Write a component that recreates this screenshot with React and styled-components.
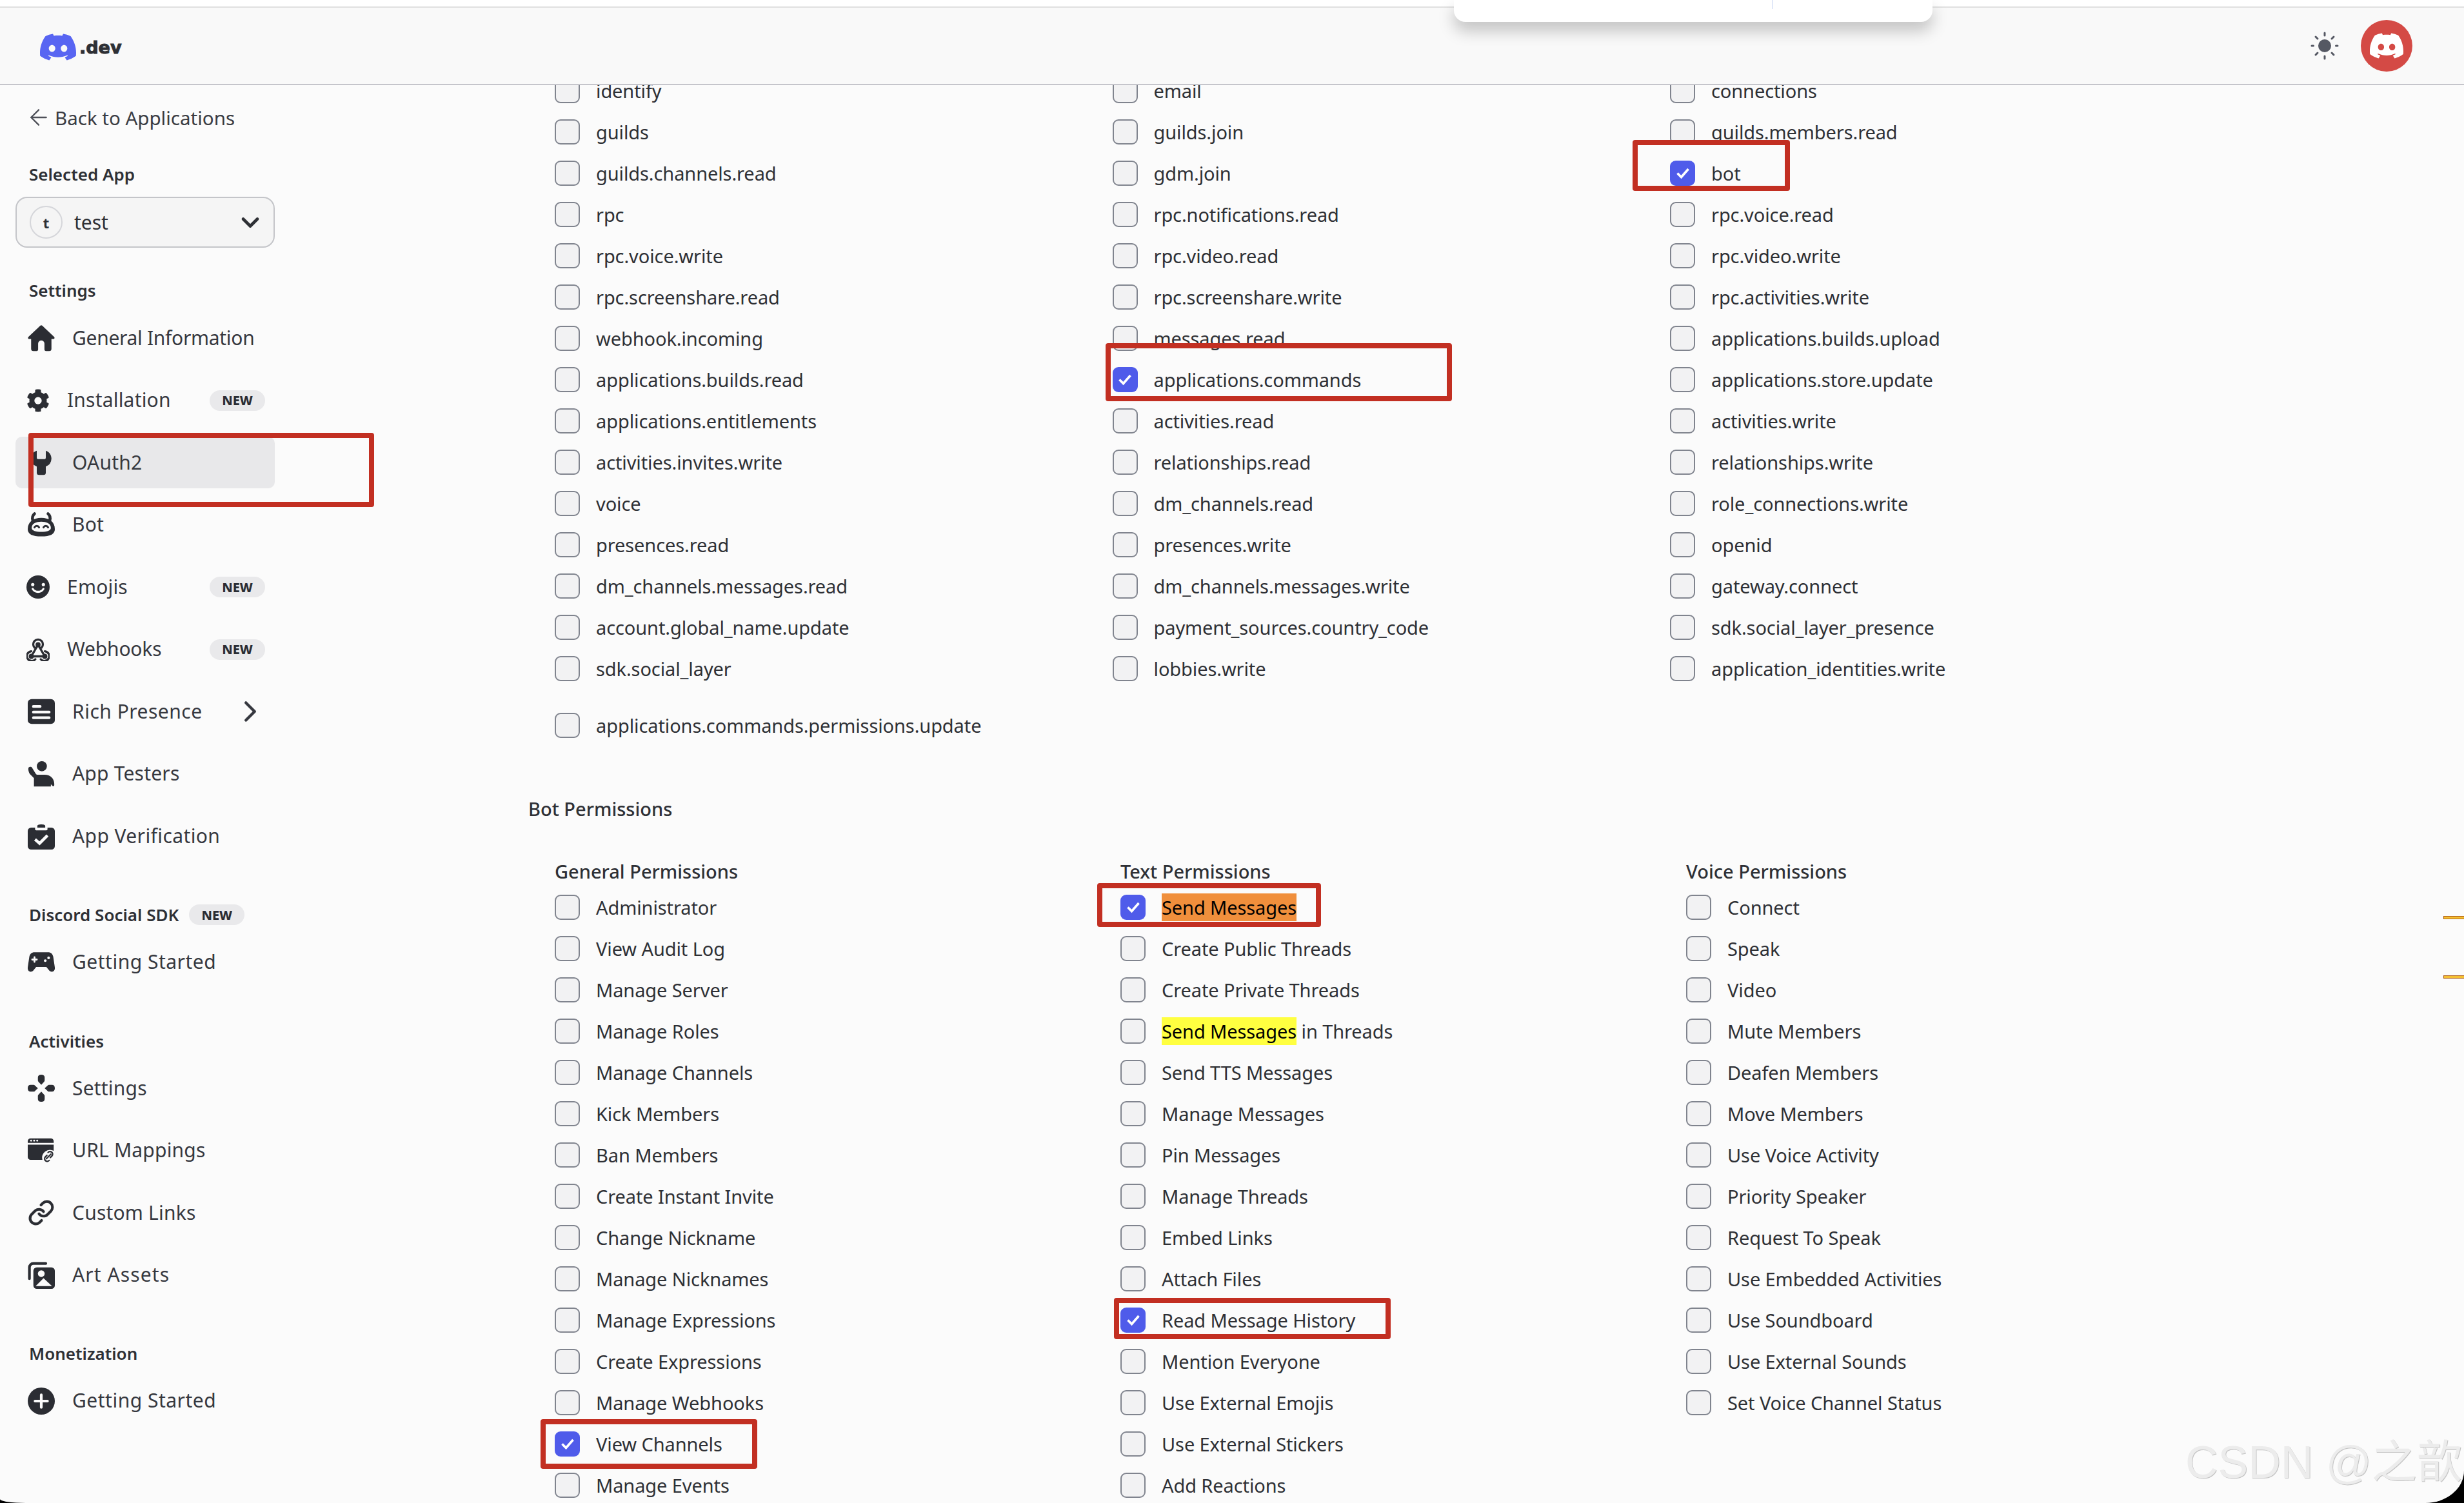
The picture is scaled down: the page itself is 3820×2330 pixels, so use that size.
import React from 'react';
import styled, { createGlobalStyle } from 'styled-components';
import { ArrowLeft, ChevronDown, ChevronRight, Link as LinkIcon } from 'lucide-react';
import { FaCog } from 'react-icons/fa';

const GlobalStyle = createGlobalStyle`
  html, body {
    margin: 0;
    padding: 0;
    background: #000;
  }
  * {
    box-sizing: border-box;
  }
`;

const Page = styled.div`
  position: relative;
  width: 3820px;
  height: 2330px;
  overflow: hidden;
  background: #fbfbfb;
  border-radius: 0 0 60px 40px / 0 0 50px 6px;
  font-family: "Noto Sans", sans-serif;
  color: #2e3035;
`;

const TopStrip = styled.div`
  height: 12px;
  background: #fff;
  border-bottom: 2px solid #e0e0e0;
`;

const Header = styled.header`
  position: relative;
  z-index: 2;
  height: 120px;
  display: flex;
  align-items: center;
  justify-content: space-between;
  padding: 0 80px 0 62px;
  background: #f9f9f9;
  border-bottom: 2px solid #c5c5cb;
`;

const Logo = styled.div`
  padding-top: 4px;
  display: flex;
  align-items: center;
  gap: 5px;
`;

const LogoText = styled.span`
  font-family: "DejaVu Sans", sans-serif;
  font-weight: 700;
  font-size: 27px;
  line-height: 1;
  color: #2e3035;
  -webkit-text-stroke: 1px #2e3035;
`;

const HeaderRight = styled.div`
  display: flex;
  align-items: center;
  gap: 34px;
`;

const Avatar = styled.div`
  width: 80px;
  height: 80px;
  border-radius: 50%;
  background: #d44a45;
  display: flex;
  align-items: center;
  justify-content: center;
`;

const Popup = styled.div`
  position: absolute;
  z-index: 3;
  top: 0;
  left: 2254px;
  width: 742px;
  height: 34px;
  background: #fff;
  border-radius: 0 0 18px 18px;
  box-shadow: 0 14px 24px rgba(0, 0, 0, 0.22);
`;

const PopupDivider = styled.div`
  position: absolute;
  top: 0;
  left: 493px;
  width: 1px;
  height: 14px;
  background: #c9d6f2;
`;

const Body = styled.div`
  display: flex;
  height: 2198px;
`;

const Sidebar = styled.aside`
  width: 436px;
  flex-shrink: 0;
  padding: 0 10px 0 24px;
`;

const BackLink = styled.div`
  height: 40px;
  margin-top: 30px;
  padding-left: 16px;
  display: flex;
  align-items: center;
  gap: 5px;
  font-size: 29.5px;
  color: #3a3c43;
  svg {
    flex-shrink: 0;
    color: #4e5058;
  }
`;

const SectionLabel = styled.div`
  height: 34px;
  margin: ${(p) => p.$top}px 0 ${(p) => p.$bottom}px 21px;
  display: flex;
  align-items: center;
  gap: 16px;
  font-size: 26px;
  font-weight: 600;
`;

const AppSelect = styled.div`
  height: 79px;
  padding: 0 14px 0 20px;
  display: flex;
  align-items: center;
  background: #f5f5f5;
  border: 2px solid #c4c5c9;
  border-radius: 18px;
  font-size: 30px;
`;

const AppAvatar = styled.div`
  width: 51px;
  height: 51px;
  margin-right: 18px;
  border: 2px solid #d5d6da;
  border-radius: 50%;
  display: flex;
  align-items: center;
  justify-content: center;
  font-size: 22px;
  font-weight: 700;
`;

const AppName = styled.span`
  flex: 1;
`;

const NavList = styled.nav`
  display: flex;
  flex-direction: column;
  gap: 16.5px;
`;

const NavItem = styled.div`
  height: 80px;
  padding: 0 15px 0 19px;
  display: flex;
  align-items: center;
  gap: 27px;
  border-radius: 10px;
  font-size: 30px;
  color: #36383f;
  background: ${(p) => (p.$active ? '#e8e8ea' : 'transparent')};
`;

const NavIcon = styled.span`
  flex-shrink: 0;
  width: ${(p) => (p.$compact ? 36 : 42)}px;
  height: ${(p) => (p.$compact ? 36 : 42)}px;
  margin-left: ${(p) => (p.$compact ? -2 : 0)}px;
  display: flex;
  color: #2b2d33;
  svg {
    width: 100%;
    height: 100%;
    display: block;
  }
`;

const NavText = styled.span`
  flex: 1;
  padding-bottom: 2px;
  white-space: nowrap;
  letter-spacing: ${(p) => p.$track ?? 0.2}px;
`;

const Badge = styled.span`
  width: 86px;
  height: 32px;
  border-radius: 16px;
  background: #e9e9eb;
  display: inline-flex;
  align-items: center;
  justify-content: center;
  font-size: 20px;
  font-weight: 800;
  color: #2b2d33;
`;

const NavArrow = styled(ChevronRight)`
  flex-shrink: 0;
  margin: -12px -4px -12px 0;
`;

const Main = styled.main`
  flex: 1;
  overflow: hidden;
  padding-left: 424px;
`;

const ScopeGrid = styled.div`
  margin-top: -24px;
  display: grid;
  grid-template-columns: repeat(3, 864.5px);
`;

const Row = styled.label`
  height: 64px;
  display: flex;
  align-items: center;
  gap: 25px;
  font-size: 29px;
  letter-spacing: -0.1px;
  color: #2e3035;
  white-space: nowrap;
`;

const ExtraRow = styled(Row)`
  margin-top: 24px;
`;

const Box = styled.span`
  flex-shrink: 0;
  width: 39px;
  height: 39px;
  border-radius: 9px;
  display: flex;
  align-items: center;
  justify-content: center;
  background: ${(p) => (p.$on ? '#4f5bea' : '#f2f2f3')};
  border: ${(p) => (p.$on ? 'none' : '2.5px solid #80848e')};
`;

const Mark = styled.mark`
  height: 43px;
  display: inline-flex;
  align-items: center;
  color: #000;
  background: ${(p) => p.$color};
`;

const BotHeading = styled.h2`
  height: 40px;
  margin: 77px 0 57px -41px;
  display: flex;
  align-items: center;
  font-size: 29px;
  font-weight: 500;
`;

const PermGrid = styled.div`
  display: grid;
  grid-template-columns: repeat(3, 877px);
`;

const PermHeading = styled.h3`
  height: 40px;
  margin: 0 0 4px;
  display: flex;
  align-items: center;
  font-size: 29px;
  font-weight: 500;
`;

const RedBox = styled.div`
  position: absolute;
  z-index: 4;
  left: ${(p) => p.$x}px;
  top: ${(p) => p.$y}px;
  width: ${(p) => p.$w}px;
  height: ${(p) => p.$h}px;
  border: 8px solid #c22f22;
  border-radius: 4px;
  pointer-events: none;
`;

const EdgeTick = styled.div`
  position: absolute;
  right: 0;
  top: ${(p) => p.$y}px;
  width: 31px;
  height: 3px;
  background: #f5c030;
  outline: 1px solid #b0611a;
`;

const Watermark = styled.div`
  position: absolute;
  z-index: 5;
  left: 3388px;
  top: 2222px;
  font-family: "Liberation Sans", "Noto Sans CJK SC", sans-serif;
  font-size: 70px;
  line-height: 90px;
  white-space: nowrap;
  color: #ececec;
  text-shadow: 1px 1px 0 #c4c4c4;
`;

const DISCORD =
  'M20.317 4.3698a19.7913 19.7913 0 00-4.8851-1.5152.0741.0741 0 00-.0785.0371c-.211.3753-.4447.8648-.6083 1.2495-1.8447-.2762-3.68-.2762-5.4868 0-.1636-.3933-.4058-.8742-.6177-1.2495a.077.077 0 00-.0785-.037 19.7363 19.7363 0 00-4.8852 1.515.0699.0699 0 00-.0321.0277C.5334 9.0458-.319 13.5799.0992 18.0578a.0824.0824 0 00.0312.0561c2.0528 1.5076 4.0413 2.4228 5.9929 3.0294a.0777.0777 0 00.0842-.0276c.4616-.6304.8731-1.2952 1.226-1.9942a.076.076 0 00-.0416-.1057c-.6528-.2476-1.2743-.5495-1.8722-.8923a.077.077 0 01-.0076-.1277c.1258-.0943.2517-.1923.3718-.2914a.0743.0743 0 01.0776-.0105c3.9278 1.7933 8.18 1.7933 12.0614 0a.0739.0739 0 01.0785.0095c.1202.099.246.1981.3728.2924a.077.077 0 01-.0066.1276 12.2986 12.2986 0 01-1.873.8914.0766.0766 0 00-.0407.1067c.3604.698.7719 1.3628 1.225 1.9932a.076.076 0 00.0842.0286c1.961-.6067 3.9495-1.5219 6.0023-3.0294a.077.077 0 00.0313-.0552c.5004-5.177-.8382-9.6739-3.5485-13.6604a.061.061 0 00-.0312-.0286zM8.02 15.3312c-1.1825 0-2.1569-1.0857-2.1569-2.419 0-1.3332.9555-2.4189 2.157-2.4189 1.2108 0 2.1757 1.0952 2.1568 2.419 0 1.3332-.9555 2.4189-2.1569 2.4189zm7.9748 0c-1.1825 0-2.1569-1.0857-2.1569-2.419 0-1.3332.9554-2.4189 2.1569-2.4189 1.2108 0 2.1757 1.0952 2.1568 2.419 0 1.3332-.946 2.4189-2.1568 2.4189Z';

const DiscordMark = ({ w, h, color }) => (
  <svg width={w} height={h} viewBox="0 2.6 24 18.8" preserveAspectRatio="none" fill={color}>
    <path d={DISCORD} />
  </svg>
);

const SunIcon = () => (
  <svg width="44" height="44" viewBox="0 0 44 44" fill="none" stroke="#555863" strokeLinecap="round">
    <circle cx="22" cy="22" r="10" fill="#555863" stroke="none" />
    <path
      strokeWidth="3"
      d="M22 2v4M22 38v4M2 22h2.5M39.500 22H42M8 8l3 3M33 33l3 3M36 8l-3 3M11 33l-3 3"
    />
  </svg>
);

const Home = () => (
  <svg viewBox="0 0 24 24" fill="currentColor">
    <path d="M.6 11 11 1.2a1.500 1.500 0 0 1 2 0L23.400 11c.7.700.3 1.900-.7 1.900H21v8.600a2 2 0 0 1-2 2h-3a1.200 1.200 0 0 1-1.200-1.200V17a2.800 2.800 0 0 0-5.600 0v5.300A1.200 1.200 0 0 1 8 23.500H5a2 2 0 0 1-2-2v-8.600H1.300c-1 0-1.400-1.200-.7-1.900Z" />
  </svg>
);

const Wrench = () => (
  <svg viewBox="0 0 24 24" fill="currentColor">
    <path d="M8 1.500v6a1.500 1.500 0 0 0 1.500 1.500h5A1.500 1.500 0 0 0 16 7.500v-6c3 1 5 3.700 5 7a8 8 0 0 1-5 7.100V21a2 2 0 0 1-2 2h-4a2 2 0 0 1-2-2v-5.400a8 8 0 0 1-5-7.100c0-3.300 2-6 5-7Z" />
  </svg>
);

const BotFace = () => (
  <svg viewBox="0 0 24 24">
    <path d="M4.500 8C3.800 5.500 4.500 3.200 6 2M19.500 8c.7-2.500 0-4.800-1.500-6" stroke="currentColor" strokeWidth="2.600" fill="none" strokeLinecap="round" />
    <path fill="currentColor" d="M12 5.500c7 0 12 3.500 12 10 0 4.500-4 6.500-12 6.500S0 20 0 15.500c0-6.500 5-10 12-10Z" />
    <path fill="#fbfbfb" d="M12 9c4.500 0 8.500 1.500 8.500 5.500 0 2.500-4 3.500-8.500 3.500s-8.500-1-8.500-3.500C3.500 10.500 7.500 9 12 9Z" />
    <path d="M6 14c1-1.700 3-1.700 4 0M14 14c1-1.700 3-1.700 4 0" stroke="#2b2d33" strokeWidth="1.800" fill="none" strokeLinecap="round" />
  </svg>
);

const Smile = () => (
  <svg viewBox="0 0 24 24">
    <circle cx="12" cy="12" r="12" fill="currentColor" />
    <circle cx="6.500" cy="9.500" r="1.700" fill="#fbfbfb" />
    <circle cx="17.500" cy="9.500" r="1.700" fill="#fbfbfb" />
    <path d="M6.500 14c2.500 4 8.500 4 11 0" stroke="#fbfbfb" strokeWidth="2.200" fill="none" strokeLinecap="round" />
  </svg>
);

const Webhook = () => (
  <svg viewBox="0 0 24 24" fill="none" stroke="currentColor" strokeWidth="2.200" strokeLinecap="round">
    <path d="M12 7 5 19h14Z" strokeLinejoin="round" />
    <circle cx="12" cy="7" r="1.500" fill="currentColor" />
    <circle cx="5" cy="19" r="1.500" fill="currentColor" />
    <circle cx="19" cy="19" r="1.500" fill="currentColor" />
    <path d="M8.400 10A5 5 0 1 1 15.600 10" />
    <path d="M5 13.700A5 5 0 1 0 9.200 22" />
    <path d="M19 13.700A5 5 0 1 1 14.800 22" />
  </svg>
);

const ListCard = () => (
  <svg viewBox="0 0 24 24">
    <rect y="1" width="24" height="22" rx="3.500" fill="currentColor" />
    <path d="M5 7.500h6M5 12.500h14M5 17.500h14" stroke="#fbfbfb" strokeWidth="2.400" strokeLinecap="round" />
  </svg>
);

const Tester = () => (
  <svg viewBox="0 0 24 24" fill="currentColor">
    <circle cx="12.500" cy="5" r="4.500" />
    <path d="M.6 6.500c.3-1 2.600-1.300 3.100-.3L7 11.500c.5.800 1 1 2 1h6c5 0 8.500 3.500 8.500 8v1.300c0 .8-.9 1.200-1.500.7l-1.500-1.500V23H5.500V15.500L1.800 11.800C.8 10.200.3 8 .6 6.500Z" />
  </svg>
);

const Clipboard = () => (
  <svg viewBox="0 0 24 24">
    <path fill="currentColor" d="M8.500 3c0-1.800 7-1.800 7 0v1.500h-7zM3 4.500h3.500V6c0 .6.400 1 1 1h9c.6 0 1-.4 1-1V4.500H21a3 3 0 0 1 3 3V21a3 3 0 0 1-3 3H3a3 3 0 0 1-3-3V7.500a3 3 0 0 1 3-3Z" />
    <path d="m6.500 15 4 3.500 7-7" stroke="#fbfbfb" strokeWidth="2.600" fill="none" />
  </svg>
);

const DPad = () => (
  <svg viewBox="0 0 24 24" fill="currentColor">
    <path d="M9 2.500C9 1 10 0 12 0s3 1 3 2.500v2.700c0 .5-.2.800-.5 1.100L12 9 9.500 6.300C9.200 6 9 5.700 9 5.200ZM9 21.500c0 1.500 1 2.500 3 2.500s3-1 3-2.500v-2.700c0-.5-.2-.8-.5-1.100L12 15l-2.500 2.700c-.3.300-.5.600-.5 1.100ZM2.500 9C1 9 0 10 0 12s1 3 2.500 3h2.700c.5 0 .8-.2 1.100-.5L9 12 6.300 9.500C6 9.200 5.700 9 5.200 9ZM21.500 9c1.500 0 2.500 1 2.500 3s-1 3-2.500 3h-2.700c-.5 0-.8-.2-1.100-.5L15 12l2.700-2.500c.3-.3.600-.5 1.100-.5Z" />
  </svg>
);

const UrlWindow = () => (
  <svg viewBox="0 0 24 24">
    <path fill="currentColor" d="M2.500 1h18A2.500 2.500 0 0 1 23 3.500V5H0V3.500A2.500 2.500 0 0 1 2.500 1ZM0 6.500h23V12a7 7 0 0 0-10 8H2.500A2.500 2.500 0 0 1 0 17.500Z" />
    <circle cx="3" cy="3" r=".8" fill="#fbfbfb" />
    <circle cx="5.700" cy="3" r=".8" fill="#fbfbfb" />
    <circle cx="8.400" cy="3" r=".8" fill="#fbfbfb" />
    <path d="M18 13.500a2.300 2.300 0 0 1 3.500 3l-1.500 1.500M19 20.500a2.300 2.300 0 0 1-3.500-3l1.500-1.500M16.500 19l4-4" stroke="currentColor" strokeWidth="1.300" fill="none" strokeLinecap="round" />
  </svg>
);

const ArtAssets = () => (
  <svg viewBox="0 0 24 24">
    <path d="M1.500 15V5a3.500 3.500 0 0 1 3.500-3.500h11" stroke="currentColor" strokeWidth="2.400" fill="none" strokeLinecap="round" />
    <rect x="5" y="5" width="19" height="19" rx="3" fill="currentColor" />
    <circle cx="12" cy="10.500" r="3" fill="#fbfbfb" />
    <path d="M7 21.500 14 14.500l7.500 7Z" fill="#fbfbfb" />
  </svg>
);

const PlusCircle = () => (
  <svg viewBox="0 0 24 24">
    <circle cx="12" cy="12" r="12" fill="currentColor" />
    <path d="M12 6.500v11M6.500 12h11" stroke="#fbfbfb" strokeWidth="2.400" strokeLinecap="round" />
  </svg>
);

const Gamepad = () => (
  <svg viewBox="0 0 24 24">
    <path fill="currentColor" d="M6 3.500h12c2.500 0 4 1.500 4.600 4L24 17c.3 2.500-1 3.800-2.500 3.800-1.200 0-2-.5-2.800-1.500L16.500 16.500h-9L5.300 19.300c-.8 1-1.600 1.500-2.800 1.500C1 20.800-.3 19.500 0 17L1.400 7.500C2 5 3.500 3.500 6 3.500Z" />
    <path d="M6 8v4M4 10h4" stroke="#fbfbfb" strokeWidth="1.600" strokeLinecap="round" />
    <circle cx="15.500" cy="11" r="1.200" fill="#fbfbfb" />
    <circle cx="18.500" cy="8.500" r="1.200" fill="#fbfbfb" />
  </svg>
);

const Check = () => (
  <svg width="24" height="24" viewBox="0 0 24 24" fill="none" stroke="#fff" strokeWidth="3.600">
    <path d="m3.500 12.500 6 6L20.500 6" />
  </svg>
);

const settingsNav = [
  { label: 'General Information', icon: <Home />, track: -0.3 },
  { label: 'Installation', icon: <FaCog />, compact: true, badge: true },
  { label: 'OAuth2', icon: <Wrench />, active: true },
  { label: 'Bot', icon: <BotFace /> },
  { label: 'Emojis', icon: <Smile />, compact: true, badge: true },
  { label: 'Webhooks', icon: <Webhook />, compact: true, badge: true, track: -0.2 },
  { label: 'Rich Presence', icon: <ListCard />, arrow: true, track: 0.5 },
  { label: 'App Testers', icon: <Tester /> },
  { label: 'App Verification', icon: <Clipboard />, track: 0.4 },
];

const activitiesNav = [
  { label: 'Settings', icon: <DPad /> },
  { label: 'URL Mappings', icon: <UrlWindow /> },
  { label: 'Custom Links', icon: <LinkIcon strokeWidth={2.4} /> },
  { label: 'Art Assets', icon: <ArtAssets />, track: 1.1 },
];

const sdkNav = [{ label: 'Getting Started', icon: <Gamepad />, track: 0.5 }];
const monetizationNav = [{ label: 'Getting Started', icon: <PlusCircle />, track: 0.5 }];

const scopes = [
  'identify', 'email', 'connections',
  'guilds', 'guilds.join', 'guilds.members.read',
  'guilds.channels.read', 'gdm.join', 'bot',
  'rpc', 'rpc.notifications.read', 'rpc.voice.read',
  'rpc.voice.write', 'rpc.video.read', 'rpc.video.write',
  'rpc.screenshare.read', 'rpc.screenshare.write', 'rpc.activities.write',
  'webhook.incoming', 'messages.read', 'applications.builds.upload',
  'applications.builds.read', 'applications.commands', 'applications.store.update',
  'applications.entitlements', 'activities.read', 'activities.write',
  'activities.invites.write', 'relationships.read', 'relationships.write',
  'voice', 'dm_channels.read', 'role_connections.write',
  'presences.read', 'presences.write', 'openid',
  'dm_channels.messages.read', 'dm_channels.messages.write', 'gateway.connect',
  'account.global_name.update', 'payment_sources.country_code', 'sdk.social_layer_presence',
  'sdk.social_layer', 'lobbies.write', 'application_identities.write',
];

const checkedScopes = ['bot', 'applications.commands'];

const permissions = [
  {
    title: 'General Permissions',
    items: [
      'Administrator', 'View Audit Log', 'Manage Server', 'Manage Roles', 'Manage Channels',
      'Kick Members', 'Ban Members', 'Create Instant Invite', 'Change Nickname', 'Manage Nicknames',
      'Manage Expressions', 'Create Expressions', 'Manage Webhooks', 'View Channels', 'Manage Events',
    ],
  },
  {
    title: 'Text Permissions',
    items: [
      'Send Messages', 'Create Public Threads', 'Create Private Threads', 'Send Messages in Threads',
      'Send TTS Messages', 'Manage Messages', 'Pin Messages', 'Manage Threads', 'Embed Links',
      'Attach Files', 'Read Message History', 'Mention Everyone', 'Use External Emojis',
      'Use External Stickers', 'Add Reactions',
    ],
  },
  {
    title: 'Voice Permissions',
    items: [
      'Connect', 'Speak', 'Video', 'Mute Members', 'Deafen Members', 'Move Members', 'Use Voice Activity',
      'Priority Speaker', 'Request To Speak', 'Use Embedded Activities', 'Use Soundboard',
      'Use External Sounds', 'Set Voice Channel Status',
    ],
  },
];

const checkedPerms = ['View Channels', 'Send Messages', 'Read Message History'];

const redBoxes = [
  { x: 44, y: 671, w: 536, h: 115 },
  { x: 2531, y: 217, w: 244, h: 79 },
  { x: 1714, y: 532, w: 537, h: 90 },
  { x: 1701, y: 1369, w: 347, h: 68 },
  { x: 1727, y: 2012, w: 429, h: 64 },
  { x: 838, y: 2200, w: 336, h: 77 },
];

const renderNav = (items) => (
  <NavList>
    {items.map((item) => (
      <NavItem key={item.label} $active={item.active}>
        <NavIcon $compact={item.compact}>{item.icon}</NavIcon>
        <NavText $track={item.track}>{item.label}</NavText>
        {item.badge && <Badge>NEW</Badge>}
        {item.arrow && <NavArrow size={54} strokeWidth={2} />}
      </NavItem>
    ))}
  </NavList>
);

const permLabel = (name) => {
  if (name === 'Send Messages') return <Mark $color="#f08f3c">Send Messages</Mark>;
  if (name === 'Send Messages in Threads') {
    return (
      <span>
        <Mark $color="#ffff40">Send Messages</Mark> in Threads
      </span>
    );
  }
  return name;
};

const App = () => {
  return (
    <Page>
      <GlobalStyle />
      <TopStrip />
      <Popup>
        <PopupDivider />
      </Popup>
      <Header>
        <Logo>
          <DiscordMark w={56} h={42} color="#5865f2" />
          <LogoText>.dev</LogoText>
        </Logo>
        <HeaderRight>
          <SunIcon />
          <Avatar>
            <DiscordMark w={52} h={40} color="#fff" />
          </Avatar>
        </HeaderRight>
      </Header>

      <Body>
        <Sidebar>
          <BackLink>
            <ArrowLeft size={40} strokeWidth={1.4} />
            Back to Applications
          </BackLink>
          <SectionLabel $top={51} $bottom={18}>Selected App</SectionLabel>
          <AppSelect>
            <AppAvatar>t</AppAvatar>
            <AppName>test</AppName>
            <ChevronDown size={44} strokeWidth={2.6} />
          </AppSelect>
          <SectionLabel $top={49} $bottom={17}>Settings</SectionLabel>
          {renderNav(settingsNav)}
          <SectionLabel $top={65} $bottom={16}>
            Discord Social SDK
            <Badge>NEW</Badge>
          </SectionLabel>
          {renderNav(sdkNav)}
          <SectionLabel $top={66} $bottom={16}>Activities</SectionLabel>
          {renderNav(activitiesNav)}
          <SectionLabel $top={64} $bottom={17}>Monetization</SectionLabel>
          {renderNav(monetizationNav)}
        </Sidebar>

        <Main>
          <ScopeGrid>
            {scopes.map((scope) => (
              <Row key={scope}>
                <Box $on={checkedScopes.includes(scope)}>
                  {checkedScopes.includes(scope) && <Check />}
                </Box>
                {scope}
              </Row>
            ))}
          </ScopeGrid>
          <ExtraRow>
            <Box />
            applications.commands.permissions.update
          </ExtraRow>

          <BotHeading>Bot Permissions</BotHeading>

          <PermGrid>
            {permissions.map((group) => (
              <div key={group.title}>
                <PermHeading>{group.title}</PermHeading>
                {group.items.map((name) => (
                  <Row key={name}>
                    <Box $on={checkedPerms.includes(name)}>
                      {checkedPerms.includes(name) && <Check />}
                    </Box>
                    {permLabel(name)}
                  </Row>
                ))}
              </div>
            ))}
          </PermGrid>
        </Main>
      </Body>

      {redBoxes.map((box) => (
        <RedBox key={box.x} $x={box.x} $y={box.y} $w={box.w} $h={box.h} />
      ))}
      <EdgeTick $y={1421} />
      <EdgeTick $y={1513} />
      <Watermark>CSDN @之歆</Watermark>
    </Page>
  );
};

export default App;
